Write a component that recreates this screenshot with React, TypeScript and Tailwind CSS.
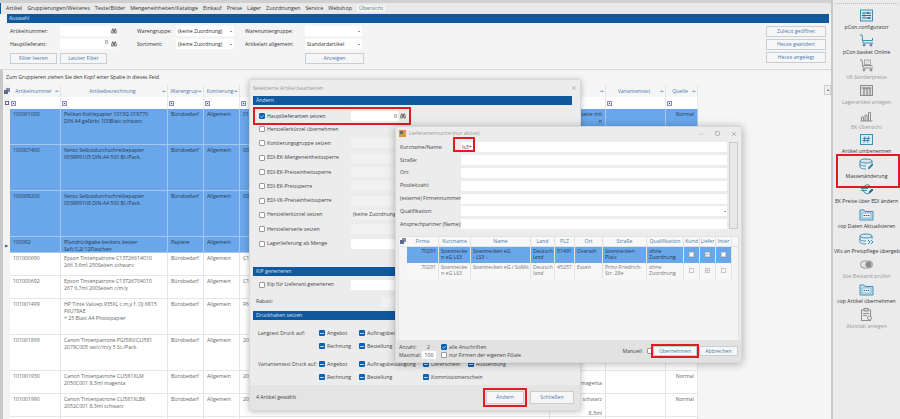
import { Binoculars, Check, Minus, Square, X } from 'lucide-react';
import type { ReactNode } from 'react';

type Row = {
  nr: string;
  title: string[];
  group: string;
  code: string;
  extra?: string[];
  height: string;
  selected?: boolean;
};

const rows: Row[] = [
  { nr: '100001000', title: ['Pelikan Kohlepapier 1015G 018770', 'DIN A4 gefärbt 100Blatt schwarz'], group: 'Bürobedarf', code: '01', extra: ['Rückseite mit', 'n'], height: 'h-[36px]', selected: true },
  { nr: '100007400', title: ['Xerox Selbstdurchschreibepapier', '003R99105 DIN A4 500 Bl./Pack.'], group: 'Bürobedarf', code: '00', height: 'h-[46px]', selected: true },
  { nr: '100008200', title: ['Xerox Selbstdurchschreibepapier', '003R99108 DIN A4 500 Bl./Pack.'], group: 'Bürobedarf', code: '00', height: 'h-[46px]', selected: true },
  { nr: '100092', title: ['Pfandrückgabe beckers bester', 'Saft 0,2l 12Flaschen'], group: 'Papiere', code: '', height: 'h-[16px]', selected: true },
  { nr: '101000690', title: ['Epson Tintenpatrone C13T26614010', '266 3,6ml 250Seiten schwarz'], group: 'Bürobedarf', code: 'C1', height: 'h-[23px]' },
  { nr: '101000692', title: ['Epson Tintenpatrone C13T26704010', '267 6,7ml 200Seiten c/m/y'], group: 'Bürobedarf', code: 'C1', height: 'h-[23px]' },
  { nr: '101001499', title: ['HP Tinte Valuep.935XL c,m,y  f. OJ 6815', 'F6U78AE', '+ 25 Blatt A4 Photopapier'], group: 'Bürobedarf', code: 'F6', height: 'h-[36px]' },
  { nr: '101001899', title: ['Canon Tintenpatrone PGI580/CLI581', '2078C005 sw/c/m/y 5 St./Pack.'], group: 'Bürobedarf', code: '20', height: 'h-[36px]' },
  { nr: '101001930', title: ['Canon Tintenpatrone CLI581XLM', '2050C001 8,3ml magenta'], group: 'Bürobedarf', code: '20', extra: ['', 'Canon magenta'], height: 'h-[23px]' },
  { nr: '101001990', title: ['Canon Tintenpatrone CLI581XLBK', '2052C001 8,3ml schwarz'], group: 'Bürobedarf', code: '20', extra: ['Canon schwarz', '', '8,3ml'], height: 'h-[23px]' },
  { nr: '', title: [], group: '', code: '', height: 'h-[23px]' },
];

const editRows = [
  'Herstellerkürzel übernehmen',
  'Kontierungsgruppe setzen',
  'EDI-EK-Mengeneinheitssperre',
  'EDI-EK-Preiseinheitssperre',
  'EDI-EK-Preissperre',
  'EDI-VK-Preiseinheitssperre',
  'Herstellerkürzel setzen',
  'Herstellerserie setzen',
  'Lagerlieferung ab Menge',
];

function Box({ on = false, dash = false }: { on?: boolean; dash?: boolean }) {
  if (dash) {
    return (
      <span className="flex h-[6px] w-[6px] shrink-0 items-center justify-center rounded-[1px] bg-[#0f62b3]">
        <span className="h-px w-[4px] bg-[#bcd7f2]" />
      </span>
    );
  }
  return (
    <span
      className={`flex h-[6px] w-[6px] shrink-0 items-center justify-center rounded-[1px] border ${
        on ? 'border-[#0f62b3] bg-[#0f62b3]' : 'border-[#9a9a9a] bg-white'
      }`}
    >
      {on && <Check size={5} strokeWidth={4} className="text-white" />}
    </span>
  );
}

function Bar({ children }: { children: ReactNode }) {
  return <div className="flex h-[9px] items-center bg-[#10599f] pl-[3px] text-[#d5e3f2]">{children}</div>;
}

function Btn({ children, className = '' }: { children: ReactNode; className?: string }) {
  return (
    <div className={`flex items-center justify-center border border-[#c6ced6] bg-[#f6f6f6] text-[#4b78ad] ${className}`}>
      {children}
    </div>
  );
}

function Glass() {
  return <Binoculars size={6} strokeWidth={3} className="text-[#666]" />;
}

function Select({ value, className = '' }: { value?: string; className?: string }) {
  return (
    <div className={`flex h-[10px] items-center justify-between bg-white px-[2px] ${className}`}>
      <span>{value}</span>
      <span className="text-[4px] text-[#333]">▪</span>
    </div>
  );
}

function Filter() {
  return (
    <div className="flex h-[56px] flex-col border-b border-[#d4d8dc] bg-[#f4f4f4]">
      <div className="mx-[7px] mr-[2px] flex h-[9px] items-center bg-[#10599f] pl-[2px] text-[#d5e3f2]">Auswahl</div>
      <div className="flex pl-[10px] pt-[3px] text-[#333]">
        <div className="flex w-[117px] flex-col gap-[3px]">
          <div className="flex h-[10px] items-center">
            <span className="w-[50px]">Artikelnummer:</span>
            <span className="h-full w-[50px] bg-white" />
            <span className="flex h-full w-[7px] items-center justify-center bg-[#fafafa]"><Glass /></span>
          </div>
          <div className="flex h-[10px] items-center">
            <span className="w-[50px]">Hauptlieferant:</span>
            <span className="h-full w-[50px] bg-white pr-[2px] text-right">0</span>
            <span className="flex h-full w-[7px] items-center justify-center bg-[#fafafa]"><Glass /></span>
          </div>
          <div className="mt-[1px] flex gap-[3px]">
            <Btn className="h-[11px] w-[47px]">Filter leeren</Btn>
            <Btn className="h-[11px] w-[47px]">Letzter Filter</Btn>
          </div>
        </div>
        <div className="ml-[10px] flex w-[97px] flex-col gap-[3px]">
          <div className="flex items-center">
            <span className="w-[39px]">Warengruppe:</span>
            <Select value="(keine Zuordnung)" className="w-[58px]" />
          </div>
          <div className="flex items-center">
            <span className="w-[39px]">Sortiment:</span>
            <Select value="(keine Zuordnung)" className="w-[58px]" />
          </div>
        </div>
        <div className="ml-[11px] flex w-[119px] flex-col gap-[3px]">
          <div className="flex items-center">
            <span className="w-[60px]">Warenuntergruppe:</span>
            <Select className="w-[57px]" />
          </div>
          <div className="flex items-center">
            <span className="w-[60px]">Artikelart allgemein:</span>
            <Select value="Standardartikel" className="w-[57px]" />
          </div>
          <div className="mt-[1px] flex justify-end">
            <Btn className="h-[11px] w-[59px]">Anzeigen</Btn>
          </div>
        </div>
        <div className="ml-auto mr-[5px] flex w-[60px] flex-col gap-[2px]">
          <Btn className="h-[11px]">Zuletzt geöffnet</Btn>
          <Btn className="h-[11px]">Heute geändert</Btn>
          <Btn className="h-[11px]">Heute angelegt</Btn>
        </div>
      </div>
    </div>
  );
}

function HeadCell({ label, className }: { label: string; className: string }) {
  return (
    <div className={`flex h-full items-center justify-center overflow-hidden border-r border-[#dfe5ea] pl-[2px] pr-px text-[#4b78ad] ${className}`}>
      <span className="min-w-0 flex-1 overflow-hidden whitespace-nowrap text-center">{label}</span>
      <span className="shrink-0 text-[3px] text-[#2f6fb5]">◂▸</span>
    </div>
  );
}

function FilterCell({ className }: { className: string }) {
  return (
    <div className={`flex h-full items-center gap-px border-r border-[#e8e8e8] bg-white pl-[1px] ${className}`}>
      <span className="flex h-[5px] w-[5px] items-center justify-center border border-[#8c8fc0] bg-[#e6e6f5]">
        <span className="h-px w-px bg-[#3c3fa0]" />
      </span>
    </div>
  );
}

function GridBody() {
  return (
    <div className="relative flex-1 overflow-hidden border-l-[3px] border-[#c7c7c7] bg-[#f5f5f5]">
      <div className="flex h-[15px] items-center pl-[3px] text-[#333]">Zum Gruppieren ziehen Sie den Kopf einer Spalte in dieses Feld.</div>
      <div className="flex h-[12px]">
        <div className="flex w-[7px] items-center justify-center bg-[#f0f0f0]">
          <svg width="6" height="6" viewBox="0 0 6 6"><rect x="2" width="4" height="4" fill="#8a8fa8" /><rect y="2" width="4" height="4" fill="#5e6a8c" /></svg>
        </div>
        <HeadCell label="Artikelnummer" className="w-[51px]" />
        <HeadCell label="Artikelbezeichnung" className="w-[107px]" />
        <HeadCell label="Warengrup" className="w-[36px]" />
        <HeadCell label="Kontierung" className="w-[36px]" />
        <HeadCell label="Hersteller" className="w-[310px]" />
        <HeadCell label="" className="w-[56px]" />
        <HeadCell label="Variantentext" className="w-[60px]" />
        <HeadCell label="Quelle" className="w-[32px]" />
      </div>
      <div className="flex h-[12px]">
        <div className="flex w-[7px] items-center justify-center bg-[#f0f0f0]">
          <span className="h-[4px] w-[4px] border border-[#5e6a8c] bg-white" />
        </div>
        <FilterCell className="w-[51px]" />
        <FilterCell className="w-[107px]" />
        <FilterCell className="w-[36px]" />
        <FilterCell className="w-[36px]" />
        <FilterCell className="w-[310px]" />
        <FilterCell className="w-[56px]" />
        <FilterCell className="w-[60px]" />
        <FilterCell className="w-[32px]" />
      </div>
      {rows.map((r, i) => (
        <div key={i} className={`flex ${r.height}`}>
          <div className="flex w-[7px] items-center justify-center bg-[#f3f3f3] text-[4px] text-[#10599f]">
            {i === 3 && '▶'}
          </div>
          <div className={`flex flex-1 ${r.selected ? 'bg-[#69a7ea] text-[#26374f]' : 'bg-white text-[#666]'}`}>
            {[
              { w: 'w-[51px]', lines: [r.nr], right: false },
              { w: 'w-[107px]', lines: r.title, right: false },
              { w: 'w-[36px]', lines: [r.group], right: false },
              { w: 'w-[36px]', lines: r.nr ? ['Allgemein'] : [], right: false },
              { w: 'w-[310px]', lines: [r.code], right: false },
              { w: 'w-[56px]', lines: r.extra ?? [], right: true },
              { w: 'w-[60px]', lines: [], right: false },
              { w: 'w-[32px]', lines: r.nr ? ['Normal'] : [], right: true },
            ].map((c, j) => (
              <div
                key={j}
                className={`${c.w} overflow-hidden border-b border-r px-[3px] pt-[2px] ${
                  r.selected ? 'border-[#a6c8ee]' : 'border-[#e6e6e6]'
                } ${c.right ? 'text-right' : ''}`}
              >
                {c.lines.map((l, k) => (
                  <div key={k} className="h-[7px] whitespace-nowrap">{l}</div>
                ))}
              </div>
            ))}
            <div className="flex-1 bg-[#f5f5f5]" />
          </div>
        </div>
      ))}
      <div className="absolute right-0 top-[15px] flex h-[10px] w-[7px] items-start justify-center border border-[#d0d0d0] bg-[#f0f0f0] text-[4px] text-[#555]">▴</div>
    </div>
  );
}

function EditDialog() {
  return (
    <div className="absolute left-[249px] top-[79px] flex h-[332px] w-[332px] flex-col rounded-[2px] border border-[#d8d8d8] bg-[#ececec] shadow-[0_1px_6px_rgba(0,0,0,0.25)]">
      <div className="flex h-[16px] items-center justify-between pl-[3px] pr-[3px] text-[#999]">
        <span>Selektierte Artikel bearbeiten</span>
        <X size={6} className="text-[#888]" />
      </div>
      <div className="mx-[3px] mr-[8px] flex flex-1 flex-col text-[#444]">
        <Bar>Ändern</Bar>
        <div className="mt-[2px] flex h-[18px] w-[158px] items-center border-2 border-[#e01b24] pl-[4px] text-[#26374f]">
          <Box on />
          <span className="ml-[2px] w-[84px]">Hauptlieferanten setzen</span>
          <span className="flex h-[10px] w-[47px] items-center justify-end bg-white pr-[1px]">0</span>
          <span className="ml-[2px]"><Glass /></span>
        </div>
        {editRows.map((label, i) => (
          <div key={label} className={`flex h-[14.3px] shrink-0 items-center pl-[6px] ${i === 0 ? '-mt-[3px]' : ''}`}>
            <Box />
            <span className="ml-[2px] w-[84px]">{label}</span>
            {i > 0 && (
              <span className={`flex h-[10px] w-[130px] items-center pl-[2px] ${i === 8 ? 'bg-white' : 'bg-[#f1f1f1]'}`}>
                {i === 6 && '(keine Zuordnung)'}
              </span>
            )}
          </div>
        ))}
        <div className="mt-[16px]"><Bar>KiP generieren</Bar></div>
        <div className="mt-[2px] flex h-[14px] items-center pl-[6px]">
          <Box />
          <span className="ml-[2px] w-[84px]">Kip für Lieferant generieren</span>
          <span className="h-[10px] w-[130px] bg-white" />
        </div>
        <div className="mt-[3px] flex h-[14px] items-center pl-[3px]">
          <span className="w-[125px]">Rabatt:</span>
          <span className="h-[10px] w-[60px] bg-[#f1f1f1]" />
        </div>
        <div className="mt-[2px]"><Bar>Druckhaken setzen</Bar></div>
        <div className="mt-[7px] flex flex-col">
          {[
            ['Langtext Druck auf:', 'Angebot', 'Auftragsbestätigung', '', ''],
            ['', 'Rechnung', 'Bestellung', '', ''],
            ['Variantentext Druck auf:', 'Angebot', 'Auftragsbestätigung', 'Lieferschein', 'Aussendung'],
            ['', 'Rechnung', 'Bestellung', 'Kommissionierschein', ''],
          ].map((line, i) => (
            <div key={i} className={`flex h-[13px] items-center pl-[5px] ${i === 2 ? 'mt-[5px]' : ''}`}>
              <span className="w-[61px]">{line[0]}</span>
              {line.slice(1).map((t, j) => (
                <span key={j} className={`flex items-center gap-[2px] whitespace-nowrap ${j === 0 ? 'w-[40px]' : j === 1 ? 'w-[64px]' : 'w-[45px]'}`}>
                  {t && <Box dash />}
                  {t}
                </span>
              ))}
            </div>
          ))}
        </div>
      </div>
      <div className="flex h-[25px] items-center bg-[#e4e4e4] pl-[6px] pr-[6px] text-[#444]">
        <span>4 Artikel gewählt</span>
        <div className="ml-auto mr-[3px] border-2 border-[#e01b24] p-px">
          <Btn className="h-[13px] w-[38px]">Ändern</Btn>
        </div>
        <Btn className="h-[13px] w-[44px]">Schließen</Btn>
      </div>
    </div>
  );
}

const searchFields = ['Kurzname/Name:', 'Straße:', 'Ort:', 'Postleitzahl:', '(externe) Firmennummer:', 'Qualifikation:', 'Ansprechpartner (Name):'];

const supplierCols = [
  { label: 'Firma', w: 'w-[32px]' },
  { label: 'Kurzname', w: 'w-[32px]' },
  { label: 'Name', w: 'w-[60px]' },
  { label: 'Land', w: 'w-[24px]' },
  { label: 'PLZ', w: 'w-[20px]' },
  { label: 'Ort', w: 'w-[28px]' },
  { label: 'Straße', w: 'w-[44px]' },
  { label: 'Qualifikation', w: 'w-[37px]' },
  { label: 'Kund', w: 'w-[16px]' },
  { label: 'Liefer', w: 'w-[16px]' },
  { label: 'Inter', w: 'w-[16px]' },
];

const suppliers = [
  { selected: true, cells: [['70291'], ['Soennecke', 'n eG LS3'], ['Soennecken eG', '- LS3 -'], ['Deutsch', 'land'], ['51491'], ['Overath'], ['Soennecken-', 'Platz'], ['ohne', 'Zuordnung']] },
  { selected: false, cells: [['70291'], ['Soennecke', 'n eG LS3'], ['Soennecken eG / SoMit'], ['Deutsch', 'land'], ['45257'], ['Essen'], ['Prinz-Friedrich-', 'Str. 28e'], ['ohne', 'Zuordnung']] },
];

function SupplierDialog() {
  return (
    <div className="absolute left-[395px] top-[126px] flex h-[237px] w-[347px] flex-col rounded-[2px] border border-[#d8d8d8] bg-[#ececec] text-[#444] shadow-[0_1px_8px_rgba(0,0,0,0.3)]">
      <div className="flex h-[13px] shrink-0 items-center pl-[3px] pr-[4px] text-[#999]">
        <svg width="7" height="7" viewBox="0 0 7 7" className="mr-[3px]"><rect width="7" height="7" fill="#d99a3a" /><rect x="1" y="1" width="3" height="3" fill="#3f6fae" /></svg>
        <span>Lieferantensuche (nur aktive)</span>
        <Minus size={6} className="ml-auto text-[#aaa]" />
        <Square size={5} className="ml-[11px] text-[#777]" />
        <X size={6} className="ml-[11px] text-[#777]" />
      </div>
      <div className="flex pl-[4px] pr-[3px] pt-[1px]">
        <div className="flex-1">
          {searchFields.map((f, i) => (
            <div key={f} className="flex h-[12.8px] items-center">
              <span className="w-[61px] whitespace-nowrap">{f}</span>
              <span className="flex h-[10px] flex-1 items-center justify-between bg-white px-[1px]">
                <span>{i === 0 && 'ls3+'}</span>
                {i === 5 && <span className="text-[4px] text-[#333]">▪</span>}
              </span>
            </div>
          ))}
        </div>
        <div className="ml-[2px] mt-[1px] h-[87px] w-[9px] border border-[#c9c9c9] bg-[#e8e8e8]" />
      </div>
      <div className="mx-[2px] mt-[5px] flex h-[105px] flex-col border border-[#e2e2e2] bg-[#f4f4f4]">
        <div className="flex h-[10px] shrink-0 border-b border-[#e2e2e2] bg-[#f8f8f8] text-center text-[#4b78ad]">
          <div className="flex w-[8px] items-center justify-center">
            <svg width="6" height="6" viewBox="0 0 6 6"><rect x="2" width="4" height="4" fill="#8a8fa8" /><rect y="2" width="4" height="4" fill="#5e6a8c" /></svg>
          </div>
          {supplierCols.map((c) => (
            <div key={c.label} className={`${c.w} flex items-center justify-center overflow-hidden whitespace-nowrap border-r border-[#e2e2e2]`}>{c.label}</div>
          ))}
        </div>
        {suppliers.map((s, n) => (
          <div key={n} className={`flex h-[16px] shrink-0 ${s.selected ? 'text-[#26374f]' : 'text-[#777]'}`}>
            <div className="w-[8px] bg-[#f4f4f4]" />
            <div className={`flex flex-1 ${s.selected ? 'bg-[#69a7ea]' : 'bg-[#f7f7f7]'}`}>
              {s.cells.map((cell, i) => (
                <div key={i} className={`${supplierCols[i].w} overflow-hidden border-r border-[#e2e2e2] px-[2px] pt-[1px] leading-[6.4px] ${i === 0 ? 'text-right' : ''}`}>
                  {cell.map((l, k) => (
                    <div key={k} className="whitespace-nowrap">{l}</div>
                  ))}
                </div>
              ))}
              {[false, true, false].map((on, i) => (
                <div key={i} className="flex w-[16px] items-center justify-center border-r border-[#e2e2e2]">
                  <span className={`flex h-[5px] w-[5px] items-center justify-center border border-[#c8c8c8] ${s.selected ? 'bg-white' : 'bg-[#f7f7f7]'}`}>
                    {on && <Check size={5} strokeWidth={4} className="text-[#333]" />}
                  </span>
                </div>
              ))}
              <div className="flex-1 bg-[#f4f4f4]" />
            </div>
          </div>
        ))}
      </div>
      <div className="flex flex-1 items-center bg-[#e2e2e2] pl-[3px] pr-[3px]">
        <div className="flex flex-col">
          <div className="flex h-[8px] items-center"><span className="w-[28px]">Anzahl:</span><span>2</span></div>
          <div className="flex h-[8px] items-center"><span className="w-[23px]">Maximal:</span><span className="flex h-[8px] w-[14px] items-center justify-center bg-white">100</span></div>
        </div>
        <div className="ml-[5px] flex flex-col">
          <div className="flex h-[8px] items-center gap-[2px]"><Box on />alle Anschriften</div>
          <div className="flex h-[8px] items-center gap-[2px]"><Box />nur Firmen der eigenen Filiale</div>
        </div>
        <span className="ml-auto">Manuell</span>
        <span className="ml-[5px]"><Box /></span>
        <div className="-ml-[2px] border-2 border-[#e01b24]">
          <Btn className="h-[10px] w-[44px] border-[#7d8794]">Übernehmen</Btn>
        </div>
        <Btn className="h-[10px] w-[39px]">Abbrechen</Btn>
      </div>
      <div className="pointer-events-none absolute left-[57px] top-[10px] h-[15px] w-[22px] border-2 border-[#e01b24]" />
    </div>
  );
}

function ToolIcon({ kind }: { kind: number }) {
  const blue = '#3d8fb5';
  const grey = '#8d8d8d';
  const common = { width: 15, height: 13, viewBox: '0 0 15 13', fill: 'none', strokeWidth: 1 };
  switch (kind) {
    case 0:
      return (
        <svg {...common} stroke={blue}>
          <rect x="1.5" y="1" width="12" height="11" fill="#d7e8f1" />
          <path d="M3 4h9M3 6.5h9M3 9h9" stroke="#2c6f93" />
          <path d="M9 3v2M5 5.5v2M10 8v2" stroke="#2c6f93" strokeWidth="1.5" />
        </svg>
      );
    case 1:
      return (
        <svg {...common} stroke={blue}>
          <path d="M1 1h2l1 8h10" />
          <path d="M4 6.5h9.5V4" />
          <circle cx="5" cy="11" r="1" fill={blue} />
          <circle cx="12" cy="11" r="1" fill={blue} />
        </svg>
      );
    case 2:
      return (
        <svg {...common} stroke={grey}>
          <path d="M1 1h2l1 8h10" />
          <path d="M4 6.5h9.5" />
          <rect x="5.5" y="1" width="6" height="4.5" fill="#f0f0f0" strokeWidth="0.7" />
          <path d="M7 4.5l3-3" strokeWidth="0.7" />
          <circle cx="5" cy="11" r="1" fill={grey} />
          <circle cx="12" cy="11" r="1" fill={grey} />
        </svg>
      );
    case 3:
      return (
        <svg {...common} stroke={grey}>
          <rect x="1.5" y="1.5" width="12" height="10" fill="#dcdcdc" />
          <path d="M3 4h9" strokeWidth="1.4" />
          <path d="M5 4v7M8 4v7M11 4v7" stroke="#777" />
        </svg>
      );
    case 4:
      return (
        <svg {...common} stroke={grey}>
          <path d="M1.5 12h12M2.5 12V8h2v4M6 12V6h2v6M9.5 12V3.500h2V12" />
        </svg>
      );
    case 5:
      return (
        <svg {...common} stroke={blue}>
          <rect x="1.5" y="1.500" width="12" height="10" fill="#d7e8f1" />
          <path d="M6 3.500l-1 6M9.500 3.500l-1 6M4 5.500h7M3.500 7.500h7" stroke="#2a6cb0" strokeWidth="0.8" />
        </svg>
      );
    case 6:
    case 9:
      return (
        <svg {...common} stroke={blue}>
          <ellipse cx="7" cy="3" rx="6" ry="2" fill="#d7e8f1" />
          <path d="M1 3v6c0 1.200 2.700 2 6 2" />
          <path d="M13 3v3M1 6c0 1.200 2.700 2 6 2" />
          {kind === 6 ? <path d="M9 10l4-4 1 1-4 4z" fill={blue} /> : <path d="M9 7l2 2-2 2M12 7l2 2-2 2" />}
        </svg>
      );
    case 7:
      return (
        <svg {...common} stroke={blue}>
          <path d="M11 2.500A4.500 4.500 0 1 0 11 10M2 5.500h7M2 7.500h6" />
          <path d="M10 9l3-3 1 1-3 3z" fill="#2c6f93" stroke="#2c6f93" />
        </svg>
      );
    case 8:
    case 11:
      return (
        <svg {...common} stroke={blue}>
          <path d="M1 2h4l1 1.500h8v8.500H1z" fill="#cfe4ef" />
          <rect x="3" y="5" width="9" height="5" fill="#eef6fa" strokeWidth="0.6" />
          <path d="M4.500 7.500h6" stroke="#1e6a90" strokeDasharray="1.500 0.700" />
        </svg>
      );
    case 10:
      return (
        <svg {...common}>
          <rect x="1.500" y="3" width="12" height="7" rx="3.500" fill="#e4e4e4" stroke="#9a9a9a" />
          <circle cx="9.500" cy="6.500" r="3" fill="#8a8a8a" />
        </svg>
      );
    default:
      return (
        <svg {...common} stroke={grey}>
          <rect x="2.500" y="2" width="9" height="10.500" />
          <rect x="5" y="0.500" width="4" height="2.500" fill="#ddd" />
          <path d="M4 5.500h6M4 7.500h4" />
          <circle cx="10.500" cy="10" r="2" fill="#eee" />
        </svg>
      );
  }
}

const tools = [
  { label: 'pCon.configurator', on: true },
  { label: 'pCon.basket Online', on: true },
  { label: 'VK-Sonderpreise', on: false },
  { label: 'Lagerartikel anlegen', on: false },
  { label: 'EK-Übersicht', on: false },
  { label: 'Artikel umbenennen', on: true },
  { label: 'Massenänderung', on: true },
  { label: 'EK Preise über EDI ändern', on: true },
  { label: 'cop Daten Aktualisieren', on: true },
  { label: 'VKs an Preispflege übergeben', on: true },
  { label: 'Soe Bestand prüfen', on: false },
  { label: 'cop Artikel übernehmen', on: true },
  { label: 'Aktivität anlegen', on: false },
];

function Sidebar() {
  return (
    <aside className="relative flex w-[69px] shrink-0 flex-col overflow-hidden border-l-2 border-[#c9c9c9] bg-[#ebebeb]">
      <div className="mx-[2px] mt-[3px] h-[2px] border-t border-dotted border-[#bcbcbc]" />
      <div className="mt-[4px] flex flex-col">
        {tools.map((t, i) => (
          <div key={t.label} className={`flex h-[24.9px] shrink-0 flex-col items-center ${t.on ? 'text-[#333]' : 'text-[#999]'}`}>
            <ToolIcon kind={i} />
            <span className={`mt-[2px] whitespace-nowrap ${i === 9 ? 'self-start pl-[1px]' : ''}`}>{t.label}</span>
          </div>
        ))}
      </div>
      <div className="pointer-events-none absolute left-[3px] top-[154px] h-[34px] w-[64px] border-2 border-[#e01b24]" />
    </aside>
  );
}

export default function App() {
  return (
    <div className="relative flex h-[419px] w-[900px] overflow-hidden bg-[#f5f5f5] font-['Open_Sans',sans-serif] text-[5.2px] leading-[7px]">
      <div className="flex min-w-0 flex-1 flex-col border-t-[3px] border-[#d0d0d0]">
        <div className="flex h-[11px] shrink-0 items-center gap-[5px] border-l border-[#10599f] bg-[#e9e9e9] pl-[5px] text-[5.4px] text-[#333]">
          {['Artikel', 'Gruppierungen/Weiteres', 'Texte/Bilder', 'Mengeneinheiten/Kataloge', 'Einkauf', 'Preise', 'Läger', 'Zuordnungen', 'Service', 'Webshop'].map((t) => (
            <span key={t}>{t}</span>
          ))}
          <span className="bg-[#f4f4f4] px-[2px] text-[#4b78ad]">Übersicht</span>
        </div>
        <Filter />
        <GridBody />
      </div>
      <Sidebar />
      <EditDialog />
      <SupplierDialog />
    </div>
  );
}
